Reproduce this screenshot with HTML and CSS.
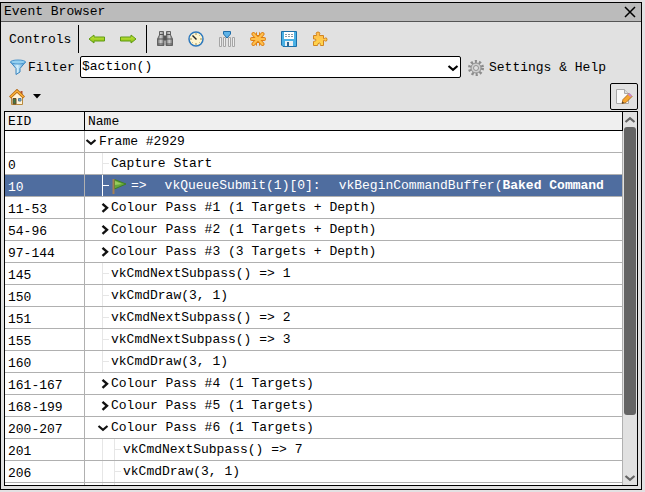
FILE: index.html
```html
<!DOCTYPE html>
<html lang="en">
<head>
<meta charset="utf-8">
<title>Event Browser</title>
<link rel="stylesheet" href="styles.css">
</head>
<body>
<svg class="defs" aria-hidden="true">
  <defs>
    <linearGradient id="green" x1="0" y1="0" x2="0" y2="1"><stop offset="0" stop-color="#c9e83e"/><stop offset="1" stop-color="#86bf12"/></linearGradient>
    <linearGradient id="orange" x1="0" y1="0" x2="0" y2="1"><stop offset="0" stop-color="#ffb84a"/><stop offset="1" stop-color="#ffd94d"/></linearGradient>
    <linearGradient id="metal" x1="0" y1="0" x2="1" y2="0"><stop offset="0" stop-color="#6d6d6d"/><stop offset=".5" stop-color="#d0d0d0"/><stop offset="1" stop-color="#707070"/></linearGradient>
    <linearGradient id="blue" x1="0" y1="0" x2="1" y2="0"><stop offset="0" stop-color="#4a9fdc"/><stop offset=".45" stop-color="#d5f0fc"/><stop offset="1" stop-color="#3c93d2"/></linearGradient>
    <symbol id="down" viewBox="0 0 12 8"><path d="M1.500 2 6 5.800 10.500 2" fill="none" stroke="currentColor" stroke-width="2.200"/></symbol>
    <symbol id="right" viewBox="0 0 8 12"><path d="M1.500 1.800 6 5.800 1.500 9.800" fill="none" stroke="currentColor" stroke-width="2.400"/></symbol>
  </defs>
</svg>
<main class="window">
  <header class="titlebar">
    <h1>Event Browser</h1>
    <button class="close" aria-label="Close"><svg width="12" height="12" viewBox="0 0 12 12"><path d="M1 1 11 11M11 1 1 11" stroke="#000" stroke-width="1.500"/></svg></button>
  </header>

  <div class="toolbar">
    <span class="caption">Controls</span>
    <div class="group">
      <button aria-label="Previous event"><svg width="18" height="16" viewBox="0 0 18 16"><path d="M1 8 6 4V6H16.500V10H6V12Z" fill="url(#green)" stroke="#5f9a12"/></svg></button>
      <button aria-label="Next event"><svg width="18" height="16" viewBox="0 0 18 16"><path d="M17 8 12 4V6H1.500V10H12V12Z" fill="url(#green)" stroke="#5f9a12"/></svg></button>
    </div>
    <div class="group tools">
      <button aria-label="Find"><svg width="16" height="16" viewBox="0 0 16 16"><g fill="url(#metal)" stroke="#626262"><path d="M2.500.500H6.500V4L7 8V14.500H.500V8L2.500 4Z"/><path d="M9.500.500H13.500V4L15.500 8V14.500H9V8L9.500 4Z"/></g><path d="M7 5H9V9H7ZM1 8H7M9 8H15M2.500 3.500H6.500M9.500 3.500H13.500M1 13H7M9 13H15" fill="#555" stroke="#555"/></svg></button>
      <button aria-label="Time durations"><svg width="16" height="16" viewBox="0 0 16 16"><circle cx="8" cy="8" r="7" fill="#fff5cf" stroke="#2d78bd" stroke-width="1.500"/><path d="M4.500 4.500 8.500 8.500" stroke="#222" stroke-width="1.500"/><path d="M8 2V4M8 12V14M2 8H4M12 8H14M12 4 11.500 4.500M4 12 4.500 11.500M12 12 11.500 11.500" stroke="#9a8d5a"/></svg></button>
      <button aria-label="Select columns"><svg width="16" height="16" viewBox="0 0 16 16"><path d="M.500 6.500H2.500V15.500H.500ZM4.500 6.500H6.500V15.500H4.500ZM9.500 6.500H11.500V15.500H9.500ZM13.500 6.500H15.500V15.500H13.500Z" fill="#ededed" stroke="#a5a5a5"/><path d="M4.500.500H11.500V3L8 7 4.500 3Z" fill="#5eb3e8" stroke="#1e6ca8"/></svg></button>
      <button aria-label="Bookmark"><svg width="16" height="16" viewBox="0 0 16 16"><g stroke="#dc7d12" stroke-width="4" stroke-linecap="round"><path d="M8 8V13.500M8 8V2.500M2 8H14M3.500 3 12.500 13M12.500 3 3.500 13"/></g><g stroke="#ffc04c" stroke-width="2.200" stroke-linecap="round"><path d="M2 8H14M3.500 3 12.500 13M12.500 3 3.500 13"/></g><path d="M8 0V4M8 12V16" stroke="#e1e1e1" stroke-width="2"/></svg></button>
      <button aria-label="Export"><svg width="16" height="16" viewBox="0 0 16 16"><path d="M.500.500H15.500V15.500H2L.500 14Z" fill="#4ab0e4" stroke="#1c6fa8"/><path d="M3 1H13V8H3Z" fill="#fff"/><path d="M4 3.500H12M4 5.500H12" stroke="#8a9aa5" stroke-dasharray="2 1"/><path d="M4 10H12V15H4Z" fill="#eaf0f4"/><path d="M6 11H8V15H6Z" fill="#2e6690"/></svg></button>
      <button aria-label="Extensions"><svg width="16" height="16" viewBox="0 0 16 16"><path d="M1.500 4.500H4.500C5 3.500 3.500 2.500 4.500 1.500Q6 .500 7.500 1.500C8.500 2.500 7 3.500 7.500 4.500H11.500V7.500C12.500 8 13 6.500 14.500 7Q15.500 8.500 14.500 10C13 10.500 12.500 9 11.500 9.500V14.500H8.500C8 13 9 12.500 7.500 12Q5.500 12 5.500 14.500H1.500V10.500C2.500 10 4 10.500 4 9Q4 7.500 1.500 8Z" fill="url(#orange)" stroke="#d18420"/></svg></button>
    </div>
  </div>

  <div class="filter">
    <svg width="18" height="17" viewBox="0 0 18 17"><path d="M1.500 3 7 9.500V15.500L11 13V9.500L16.500 3Z" fill="url(#blue)" stroke="#3983bd"/><ellipse cx="9" cy="3" rx="7.500" ry="2" fill="#94d0f0" stroke="#4a94cc"/></svg>
    <label for="filter">Filter</label>
    <div class="combo">
      <select id="filter"><option>$action()</option></select>
      <svg width="12" height="8"><use href="#down"/></svg>
    </div>
    <button class="settings"><svg width="16" height="16" viewBox="0 0 16 16"><circle cx="8" cy="8" r="6.500" fill="none" stroke="#8c8c8c" stroke-width="3" stroke-dasharray="2.100 2"/><circle cx="8" cy="8" r="5" fill="#d0d0d0" stroke="#8e8e8e"/><circle cx="8" cy="8" r="2.500" fill="#e0e0e0" stroke="#929292"/></svg>Settings &amp; Help</button>
  </div>

  <div class="actions">
    <button class="home" aria-label="Home menu"><svg width="16" height="16" viewBox="0 0 16 16"><path d="M11.500 2H13.500V6H11.500Z" fill="#b5502a"/><path d="M2.500 7.500 8 2.500 13.500 7.500V15.500H2.500Z" fill="#fff3d8" stroke="#b98a3c"/><path d="M1 8.500 8 1.800 15 8.500" fill="none" stroke="#b66a14" stroke-width="3"/><path d="M1.500 8 8 1.800 14.500 8" fill="none" stroke="#ffb73c" stroke-width="1.300"/><path d="M4 9.500H7V15H4Z" fill="#3d7a4c" stroke="#6b4a20"/><path d="M9.500 9.500H12V12H9.500Z" fill="#66a9d8" stroke="#5a7b92"/></svg><svg width="8" height="5" viewBox="0 0 8 5"><path d="M0 0H8L4 4.500Z"/></svg></button>
    <button class="edit" aria-label="Edit"><svg width="18" height="18" viewBox="0 0 18 18"><path d="M1.500 1.500H9.500L13.500 5.500V15.500H1.500Z" fill="#fafafa" stroke="#a9a9a9"/><path d="M9.500 1.500V5.500H13.500" fill="#ddd" stroke="#aaa"/><path d="M7 15.500 8 11.500 14 5.500 17 8.500 11 14.500Z" fill="#f6a630" stroke="#b57322"/><path d="M12.800 6.500 14.500 5 17 7.500 15.500 9.300Z" fill="#c78acb"/><path d="M7 15.500 7.500 13.500 9 15Z" fill="#333"/></svg></button>
  </div>

  <section class="events">
    <div class="viewport">
      <table>
        <colgroup><col class="eid"><col></colgroup>
        <thead><tr><th>EID</th><th>Name</th></tr></thead>
        <tbody>
          <tr><td></td><td><div class="node"><i class="slot"><svg width="12" height="8"><use href="#down"/></svg></i>Frame #2929</div></td></tr>
          <tr><td>0</td><td><div class="node"><i class="indent"></i><i class="slot leaf"></i>Capture Start</div></td></tr>
          <tr class="selected"><td>10</td><td><div class="node"><i class="indent"></i><i class="slot leaf"></i><svg class="flag" width="16" height="16" viewBox="0 0 16 16"><path d="M3.500 1.500 15 6 3.500 11Z" fill="#65a83c" stroke="#3f7f24"/><path d="M4 3 11 6 4 7Z" fill="#9acb5e"/><path d="M2.500 1V16" stroke="#a58052" stroke-width="2"/></svg><span>=&gt;</span><span>vkQueueSubmit(1)[0]:</span><span>vkBeginCommandBuffer(<b>Baked Command</b></span></div></td></tr>
          <tr><td>11-53</td><td><div class="node"><i class="indent"></i><i class="slot closed"><svg width="8" height="12"><use href="#right"/></svg></i>Colour Pass #1 (1 Targets + Depth)</div></td></tr>
          <tr><td>54-96</td><td><div class="node"><i class="indent"></i><i class="slot closed"><svg width="8" height="12"><use href="#right"/></svg></i>Colour Pass #2 (1 Targets + Depth)</div></td></tr>
          <tr><td>97-144</td><td><div class="node"><i class="indent"></i><i class="slot closed"><svg width="8" height="12"><use href="#right"/></svg></i>Colour Pass #3 (3 Targets + Depth)</div></td></tr>
          <tr><td>145</td><td><div class="node"><i class="indent"></i><i class="slot leaf"></i>vkCmdNextSubpass() =&gt; 1</div></td></tr>
          <tr><td>150</td><td><div class="node"><i class="indent"></i><i class="slot leaf"></i>vkCmdDraw(3, 1)</div></td></tr>
          <tr><td>151</td><td><div class="node"><i class="indent"></i><i class="slot leaf"></i>vkCmdNextSubpass() =&gt; 2</div></td></tr>
          <tr><td>155</td><td><div class="node"><i class="indent"></i><i class="slot leaf"></i>vkCmdNextSubpass() =&gt; 3</div></td></tr>
          <tr><td>160</td><td><div class="node"><i class="indent"></i><i class="slot leaf"></i>vkCmdDraw(3, 1)</div></td></tr>
          <tr><td>161-167</td><td><div class="node"><i class="indent"></i><i class="slot closed"><svg width="8" height="12"><use href="#right"/></svg></i>Colour Pass #4 (1 Targets)</div></td></tr>
          <tr><td>168-199</td><td><div class="node"><i class="indent"></i><i class="slot closed"><svg width="8" height="12"><use href="#right"/></svg></i>Colour Pass #5 (1 Targets)</div></td></tr>
          <tr><td>200-207</td><td><div class="node"><i class="indent"></i><i class="slot"><svg width="12" height="8"><use href="#down"/></svg></i>Colour Pass #6 (1 Targets)</div></td></tr>
          <tr><td>201</td><td><div class="node"><i class="indent"></i><i class="indent rail"></i><i class="slot leaf"></i>vkCmdNextSubpass() =&gt; 7</div></td></tr>
          <tr><td>206</td><td><div class="node"><i class="indent"></i><i class="indent rail"></i><i class="slot leaf"></i>vkCmdDraw(3, 1)</div></td></tr>
          <tr><td></td><td><div class="node"><i class="indent"></i><i class="indent rail"></i><i class="slot leaf"></i></div></td></tr>
        </tbody>
      </table>
    </div>
    <div class="scrollbar">
      <button aria-label="Scroll up"><svg class="up" width="12" height="8"><use href="#down"/></svg></button>
      <div class="track"><div class="thumb"></div></div>
      <button aria-label="Scroll down"><svg width="12" height="8"><use href="#down"/></svg></button>
    </div>
  </section>
</main>
</body>
</html>
```
FILE: styles.css
```css
* { box-sizing: border-box; }

body {
  margin: 0;
  padding: 2px 3px 2px 0;
  height: 100vh;
  background: #e3e1e3;
  color: #000;
  font: 13px/16px "Liberation Mono", monospace;
}

button, select { font: inherit; color: inherit; }
button { padding: 0; border: 0; background: none; }
svg { display: block; flex: none; }
.defs { position: absolute; width: 0; height: 0; }

.window {
  display: flex;
  flex-direction: column;
  height: 100%;
  border: 1px solid #000;
  background: #e1e1e1;
}

.titlebar {
  display: flex;
  align-items: center;
  justify-content: space-between;
  height: 19px;
  padding: 0 5px 0 3px;
  border-bottom: 1px solid #555;
  background: #bbb;
}
.titlebar h1 { margin: 0; font-size: 13px; font-weight: normal; }

.toolbar {
  display: flex;
  align-items: center;
  height: 34px;
  padding-left: 8px;
}
.caption { width: 69px; padding-top: 2px; }
.group {
  display: flex;
  align-items: center;
  gap: 13px;
  height: 28px;
  width: 68px;
  padding-left: 9px;
  border-left: 1px solid #000;
}
.group.tools { gap: 15px; width: auto; padding-left: 10px; }

.filter {
  display: flex;
  align-items: center;
  height: 22px;
  padding-left: 8px;
}
.filter label { width: 53px; padding: 2px 0 0 1px; }
.combo {
  position: relative;
  flex: 1;
  height: 22px;
}
.combo select {
  appearance: none;
  display: block;
  width: 100%;
  height: 22px;
  padding: 0 20px 0 1px;
  border: 1px solid #000;
  border-radius: 2px;
  background: #fff;
}
.combo svg {
  position: absolute;
  right: 2px;
  top: 8px;
  pointer-events: none;
}
.settings {
  display: flex;
  align-items: center;
  gap: 5px;
  width: 180px;
  padding: 2px 0 0 7px;
}

.actions {
  display: flex;
  align-items: center;
  justify-content: space-between;
  padding: 5px 3px 1px 8px;
}
.home { display: flex; align-items: center; gap: 8px; }
.edit {
  display: flex;
  align-items: center;
  justify-content: center;
  width: 28px;
  height: 27px;
  border: 1px solid #000;
  border-radius: 2px;
}

.events {
  flex: 1;
  display: flex;
  min-height: 0;
  margin: 0 3px 3px;
  border: 1px solid #000;
  background: #fff;
}
.viewport { flex: 1; min-width: 0; overflow: hidden; }

table {
  width: 100%;
  table-layout: fixed;
  border-spacing: 0;
}
.eid { width: 80px; }
th {
  height: 19px;
  padding: 2px 3px 0;
  border-right: 1px solid #000;
  border-bottom: 1px solid #000;
  background: #efefef;
  font-weight: normal;
  text-align: left;
}
td {
  height: 22px;
  padding: 4px 0 0 3px;
  border-right: 1px solid #b0b0b0;
  border-bottom: 1px solid #b0b0b0;
}
td + td { padding: 0; overflow: hidden; }

.node {
  display: flex;
  align-items: center;
  height: 21px;
  line-height: 26px;
  white-space: nowrap;
  --guide: #e6e6e6;
}
.indent, .slot {
  flex: none;
  display: flex;
  align-items: center;
  align-self: stretch;
}
.indent { width: 12px; }
.slot { width: 14px; color: #111; }
.closed { padding-left: 4px; }
.rail::before, .leaf::before {
  content: "";
  width: 1px;
  height: 100%;
  margin-left: 5px;
  background: var(--guide);
}
.leaf::after {
  content: "";
  width: 6px;
  height: 1px;
  background: var(--guide);
}

.node::before { content: ""; }
tr:not(.selected) .node { padding-top: 0; }
.selected { background: #4f6d9f; color: #fff; }
.selected .node { --guide: #fff; line-height: 20px; }
.flag { margin-right: 4px; }
.node span + span { margin-left: 18px; }

.scrollbar {
  display: flex;
  flex-direction: column;
  width: 14px;
  background: #e1e1e1;
  color: #646464;
}
.scrollbar button { height: 15px; padding-left: 1px; }
.up { transform: rotate(180deg); }
.track { flex: 1; padding: 0 1px; }
.thumb {
  height: 84%;
  border-radius: 3px;
  background: #646464;
}
```
